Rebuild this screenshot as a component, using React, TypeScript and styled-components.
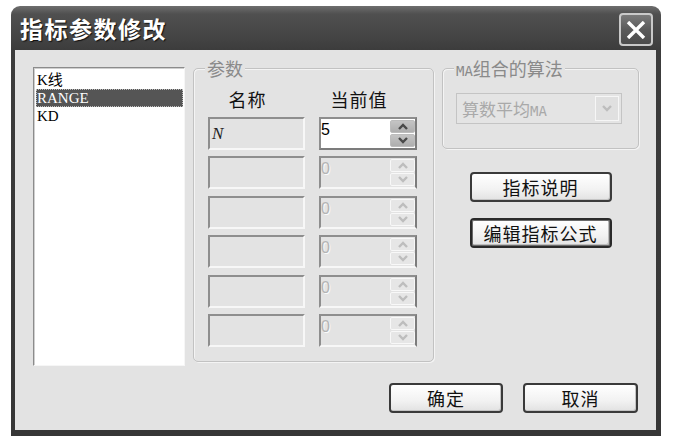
import React from 'react';
import styled, { createGlobalStyle, css } from 'styled-components';

const GlobalStyle = createGlobalStyle`
  html, body {
    margin: 0;
    background: #ffffff;
    font-family: "Noto Sans CJK SC", "Noto Sans", sans-serif;
  }
`;

const Window = styled.div`
  box-sizing: border-box;
  width: 650px;
  height: 430px;
  margin: 6px 0 0 11px;
  padding: 0 5px 6px 4px;
  display: flex;
  flex-direction: column;
  border-radius: 9px 9px 0 0;
  background: linear-gradient(#6e6e6e 0px, #505050 8px, #454545 30px, #3c3c3c 44px, #363636 100%);
`;

const TitleBar = styled.div`
  height: 44px;
  flex: none;
  display: flex;
  align-items: center;
  justify-content: space-between;
  padding: 0 3px 0 5px;
`;

const Title = styled.span`
  color: #ffffff;
  font-size: 23px;
  font-weight: 700;
  letter-spacing: 1.5px;
  text-shadow: 1px 1px 1px #111;
`;

const CloseButton = styled.div`
  box-sizing: border-box;
  width: 34px;
  height: 33px;
  margin-top: 3px;
  display: flex;
  align-items: center;
  justify-content: center;
  border: 2px solid #c9c9c9;
  border-radius: 4px;
  background: linear-gradient(#7a7a7a, #5a5a5a 50%, #4c4c4c);
`;

const Client = styled.div`
  flex: 1;
  box-sizing: border-box;
  background: #e3e3e3;
  padding: 17px 17px 17px 18px;
  display: flex;
  flex-direction: column;
  gap: 17px;
`;

const TopRow = styled.div`
  display: flex;
  gap: 8px;
  height: 299px;
`;

const ListBox = styled.div`
  box-sizing: border-box;
  width: 152px;
  height: 299px;
  padding: 3px 1px 3px 2px;
  background: #ffffff;
  border: 1px solid;
  border-color: #8c8c8c #f6f6f6 #f6f6f6 #8c8c8c;
  box-shadow: inset 1px 1px 0 #cfcfcf;
`;

const ListItem = styled.div<{ $selected?: boolean }>`
  height: 18px;
  line-height: 18px;
  padding-left: 1px;
  font-family: "Liberation Serif", "Noto Sans CJK SC", serif;
  font-size: 15px;
  color: #000;
  ${(p) =>
    p.$selected &&
    css`
      background: #555555;
      color: #ffffff;
      outline: 1px dotted #bdbdbd;
      outline-offset: -1px;
    `}
`;

const GroupBox = styled.div<{ $w: number; $h: number }>`
  position: relative;
  box-sizing: border-box;
  width: ${(p) => p.$w}px;
  height: ${(p) => p.$h}px;
  margin-top: 1px;
  border: 1px solid #c2c2c2;
  border-radius: 5px;
  box-shadow: inset 1px 1px 0 #f4f4f4, 1px 1px 0 #f4f4f4;
`;

const Legend = styled.span`
  position: absolute;
  top: -12px;
  left: 11px;
  padding: 0 2px;
  background: #e3e3e3;
  color: #8a8a8a;
  font-size: 18px;
  line-height: 22px;
`;

const ParamGrid = styled.div`
  display: grid;
  grid-template-columns: 97px 98px;
  column-gap: 14px;
  padding: 18px 0 0 14px;
`;

const HeaderCell = styled.div`
  height: 24px;
  line-height: 24px;
  padding-right: 18px;
  text-align: center;
  font-size: 18px;
  letter-spacing: 1px;
  color: #111;
`;

const FieldRows = styled.div`
  grid-column: 1 / 3;
  display: grid;
  grid-template-columns: 97px 98px;
  column-gap: 14px;
  grid-auto-rows: 33px;
  row-gap: 6.4px;
  margin-top: 6px;
`;

const inset = css`
  box-sizing: border-box;
  border: 2px solid;
  border-color: #8e8e8e #f7f7f7 #f7f7f7 #8e8e8e;
`;

const NameField = styled.div`
  ${inset};
  background: #e3e3e3;
  display: flex;
  align-items: center;
  padding-left: 2px;
  font-family: "Liberation Serif", serif;
  font-style: italic;
  font-size: 17px;
  color: #222;
`;

const ValueField = styled.div<{ $active?: boolean }>`
  ${inset};
  display: flex;
  justify-content: space-between;
  background: ${(p) => (p.$active ? '#ffffff' : '#e3e3e3')};
  border-right-color: #7c7c7c;
  border-bottom-color: ${(p) => (p.$active ? '#7c7c7c' : '#f7f7f7')};
`;

const ValueText = styled.span<{ $active?: boolean }>`
  padding: 2px 0 0 0;
  font-family: "Liberation Sans", sans-serif;
  font-size: 16px;
  line-height: 18px;
  color: ${(p) => (p.$active ? '#000' : '#b4b4b4')};
  text-shadow: ${(p) => (p.$active ? 'none' : '1px 1px 0 #fafafa')};
`;

const Spinner = styled.div`
  width: 25px;
  margin: 1px 0;
  display: flex;
  flex-direction: column;
  gap: 1px;
`;

const SpinHalf = styled.div<{ $active?: boolean }>`
  flex: 1;
  display: flex;
  align-items: center;
  justify-content: center;
  border-radius: 2px;
  background: ${(p) => (p.$active ? 'linear-gradient(#c4c4c4, #aeaeae)' : '#e6e6e6')};
  border: 1px solid ${(p) => (p.$active ? '#bcbcbc' : '#f8f8f8')};
`;

const RightColumn = styled.div`
  width: 197px;
  display: flex;
  flex-direction: column;
  align-items: center;
`;

const Combo = styled.div`
  box-sizing: border-box;
  width: 166px;
  height: 31px;
  margin: 24px 0 0 13px;
  display: flex;
  align-items: center;
  justify-content: space-between;
  border: 1px solid #c4c4c4;
  background: #e4e4e4;
  padding: 0 2px 0 5px;
  color: #a9a9a9;
  font-size: 17px;
`;

const Mono = styled.span`
  font-family: "DejaVu Sans Mono", monospace;
  font-size: 14px;
`;

const DropButton = styled.div`
  box-sizing: border-box;
  width: 24px;
  height: 25px;
  display: flex;
  align-items: center;
  justify-content: center;
  border: 1px solid #f6f6f6;
  background: #e0e0e0;
`;

const Button = styled.div<{ $w: number; $focus?: boolean }>`
  box-sizing: border-box;
  width: ${(p) => p.$w}px;
  height: 30px;
  display: flex;
  align-items: center;
  justify-content: center;
  border: 2px solid #3a3a3a;
  border-radius: 4px;
  background: linear-gradient(#ffffff, #f2f2f2 60%, #e2e2e2);
  box-shadow: inset -1px -1px 0 #c4c4c4;
  font-size: 18px;
  letter-spacing: 1px;
  color: #111;
  ${(p) =>
    p.$focus &&
    css`
      border-color: #2a2a2a;
      box-shadow: inset 0 0 0 1px #6a6a6a, inset -2px -2px 0 #bcbcbc;
    `}
`;

const BottomRow = styled.div`
  display: flex;
  justify-content: flex-end;
  gap: 20px;
  padding-right: 1px;
`;

const Arrow = ({ up, active }: { up?: boolean; active?: boolean }) => (
  <svg width="10" height="7" viewBox="0 0 10 7">
    <path
      d={up ? 'M1 6 L5 2 L9 6' : 'M1 1 L5 5 L9 1'}
      fill="none"
      stroke={active ? '#4a4a4a' : '#bdbdbd'}
      strokeWidth="2.4"
    />
  </svg>
);

const rows = [
  { name: 'N', value: '5', active: true },
  { name: '', value: '0' },
  { name: '', value: '0' },
  { name: '', value: '0' },
  { name: '', value: '0' },
  { name: '', value: '0' },
];

export default function App() {
  return (
    <>
      <GlobalStyle />
      <Window>
        <TitleBar>
          <Title>指标参数修改</Title>
          <CloseButton>
            <svg width="20" height="18" viewBox="0 0 20 18">
              <path d="M2 1 L18 17 M18 1 L2 17" stroke="#ffffff" strokeWidth="3.4" />
            </svg>
          </CloseButton>
        </TitleBar>
        <Client>
          <TopRow>
            <ListBox>
              <ListItem>K线</ListItem>
              <ListItem $selected>RANGE</ListItem>
              <ListItem>KD</ListItem>
            </ListBox>
            <GroupBox $w={241} $h={294}>
              <Legend>参数</Legend>
              <ParamGrid>
                <HeaderCell>名称</HeaderCell>
                <HeaderCell>当前值</HeaderCell>
                <FieldRows>
                  {rows.map((r, i) => (
                    <React.Fragment key={i}>
                      <NameField>{r.name}</NameField>
                      <ValueField $active={r.active}>
                        <ValueText $active={r.active}>{r.value}</ValueText>
                        <Spinner>
                          <SpinHalf $active={r.active}>
                            <Arrow up active={r.active} />
                          </SpinHalf>
                          <SpinHalf $active={r.active}>
                            <Arrow active={r.active} />
                          </SpinHalf>
                        </Spinner>
                      </ValueField>
                    </React.Fragment>
                  ))}
                </FieldRows>
              </ParamGrid>
            </GroupBox>
            <RightColumn>
              <GroupBox $w={197} $h={81}>
                <Legend>
                  <Mono>MA</Mono>组合的算法
                </Legend>
                <Combo>
                  <span>
                    算数平均<Mono>MA</Mono>
                  </span>
                  <DropButton>
                    <Arrow />
                  </DropButton>
                </Combo>
              </GroupBox>
              <Button $w={142} style={{ marginTop: 23 }}>指标说明</Button>
              <Button $w={142} $focus style={{ marginTop: 16 }}>编辑指标公式</Button>
            </RightColumn>
          </TopRow>
          <BottomRow>
            <Button $w={114}>确定</Button>
            <Button $w={115}>取消</Button>
          </BottomRow>
        </Client>
      </Window>
    </>
  );
}
